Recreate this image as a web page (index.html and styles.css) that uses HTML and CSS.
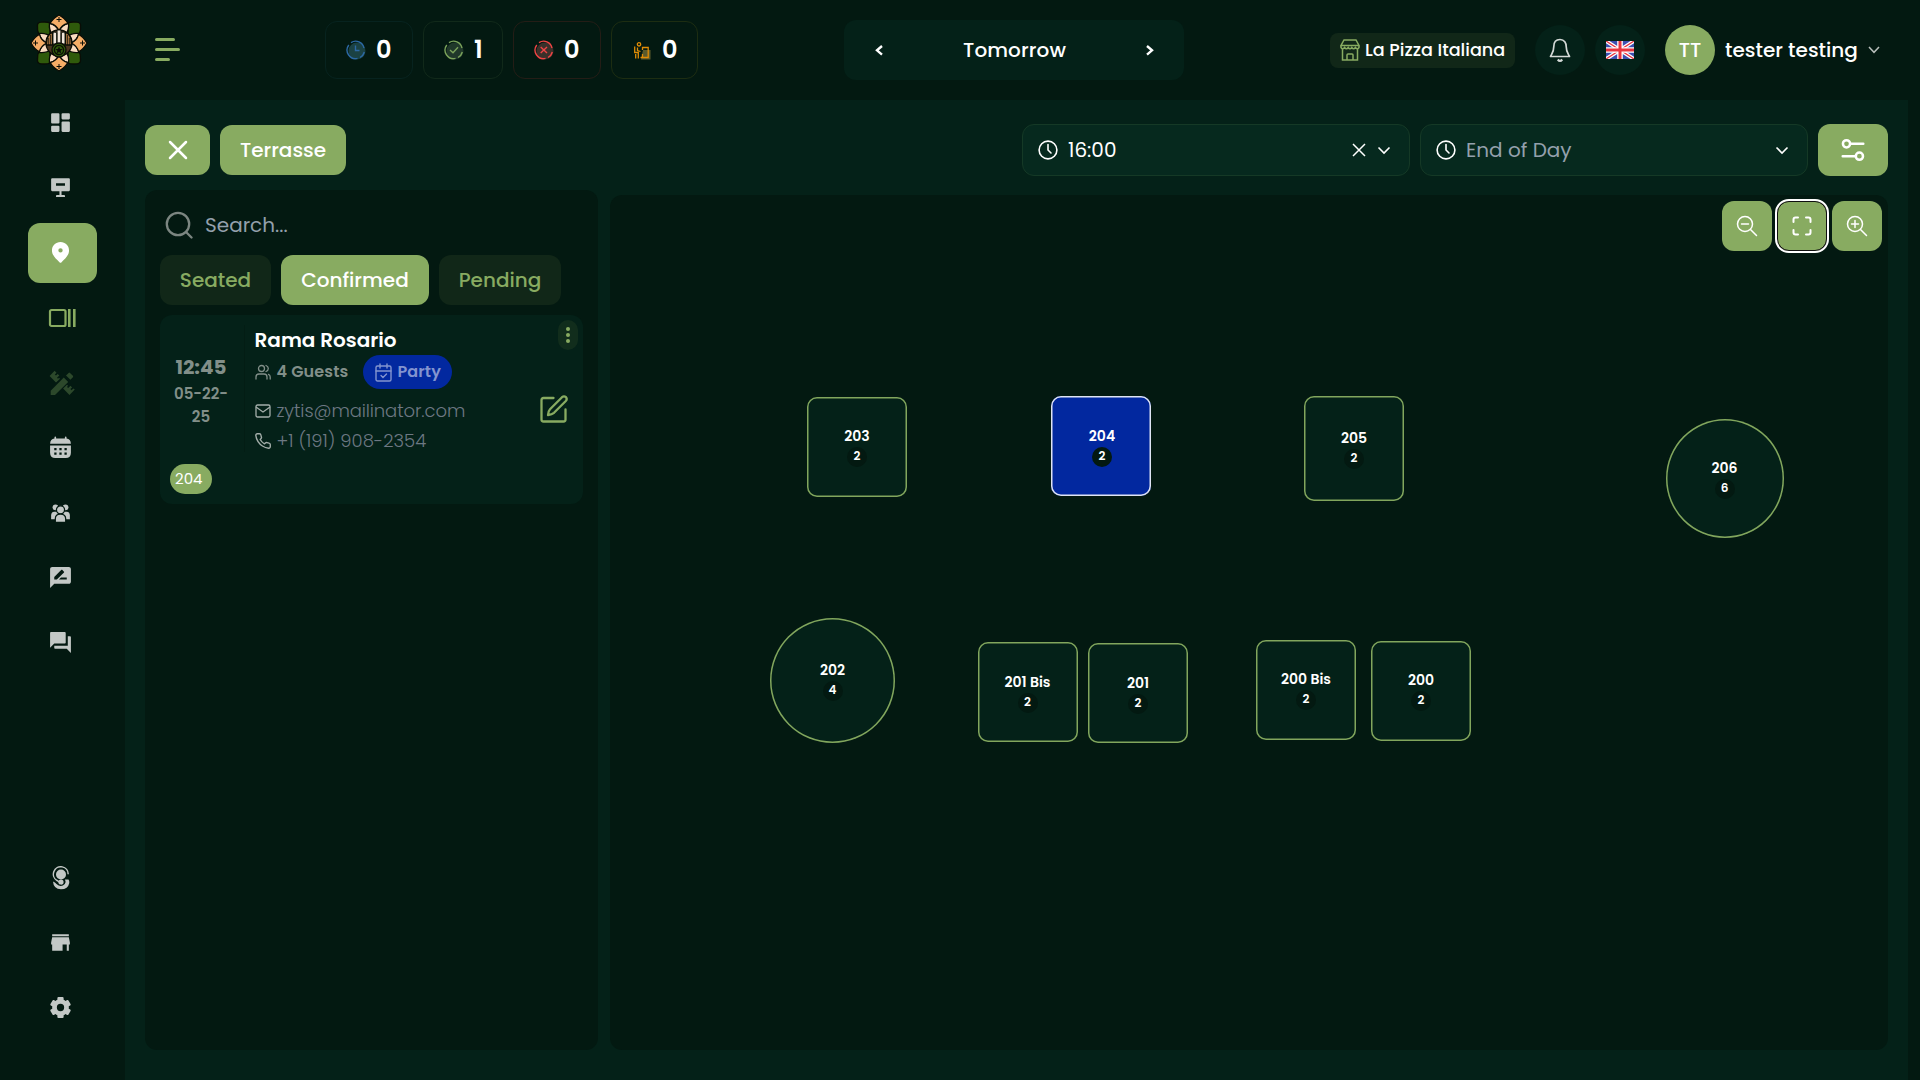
FILE: index.html
```html
<!DOCTYPE html>
<html lang="en">
<head>
<meta charset="utf-8">
<title>Floor plan</title>
<link rel="stylesheet" href="styles.css">
</head>
<body>
<div class="app">
  <aside class="sidebar">
    <div class="logo">
      <svg width="58" height="58" viewBox="-29 -29 58 58">
        <g stroke="#0a0d06" stroke-width="1.3" stroke-linejoin="round">
          <g fill="#2f5a0b">
            <path d="M-21.500-17.500Q-21.500-20.500-18-20.800Q-12-21.500-9-20V-8H-20Q-22-12-21.500-17.500Z"/>
            <path d="M21.500-17.500Q21.500-20.500 18-20.800Q12-21.500 9-20V-8H20Q22-12 21.500-17.500Z"/>
            <path d="M-21.500 17.500Q-21.500 20.500-18 20.800Q-12 21.500-9 20V8H-20Q-22 12-21.500 17.500Z"/>
            <path d="M21.500 17.500Q21.500 20.500 18 20.800Q12 21.500 9 20V8H20Q22 12 21.500 17.500Z"/>
          </g>
          <g id="petal">
            <path fill="#fbdcc0" d="M-9.500-20Q-3-18.500 0-12L-2-7H-6Q-10.500-13-9.500-20ZM9.500-20Q3-18.500 0-12L2-7H6Q10.500-13 9.500-20Z"/>
            <path fill="#f6ad66" d="M0-28Q-7-24-8.700-19.500Q-2.500-18 0-12Q2.500-18 8.700-19.500Q7-24 0-28Z"/>
            <path fill="none" stroke-width="1" d="M0-26V-21M-2.500-23.500H2.500"/>
          </g>
          <use href="#petal" transform="rotate(90)"/>
          <use href="#petal" transform="rotate(180)"/>
          <use href="#petal" transform="rotate(270)"/>
          <circle r="13" fill="#4a3520"/>
          <path fill="#b98048" d="M-12-4Q-10-10-6.500-10.500V2H-12.500ZM12-4Q10-10 6.500-10.500V2H12.500Z"/>
          <path fill="none" stroke-width=".8" d="M-10.300-5V2M-8.400-8V2M10.300-5V2M8.400-8V2"/>
          <path fill="#f0e5da" stroke-width=".9" d="M-6-10Q-4-12-2.300-10V1H-6ZM6-10Q4-12 2.300-10V1H6ZM-1.900-13H1.900V1H-1.900Z"/>
          <circle cy="7" r="7" fill="#2f5a0b"/>
          <circle cy="7" r="4.600" fill="#2f5a0b"/>
          <path fill="#0a0d06" stroke="none" d="M0 3.200L1 6 3.800 6.100 1.600 7.800 2.400 10.500 0 9-2.400 10.500-1.600 7.800-3.800 6.100-1 6Z"/>
        </g>
      </svg>
    </div>
    <nav class="nav">
      <a class="nav-item"><svg width="25" height="25" viewBox="0 0 24 24"><path d="M4 13h6a1 1 0 0 0 1-1V4a1 1 0 0 0-1-1H4a1 1 0 0 0-1 1v8a1 1 0 0 0 1 1zm0 8h6a1 1 0 0 0 1-1v-4a1 1 0 0 0-1-1H4a1 1 0 0 0-1 1v4a1 1 0 0 0 1 1zm10 0h6a1 1 0 0 0 1-1v-8a1 1 0 0 0-1-1h-6a1 1 0 0 0-1 1v8a1 1 0 0 0 1 1zM13 4v4a1 1 0 0 0 1 1h6a1 1 0 0 0 1-1V4a1 1 0 0 0-1-1h-6a1 1 0 0 0-1 1z"/></svg></a>
      <a class="nav-item"><svg width="25" height="25" viewBox="0 0 24 24"><path fill-rule="evenodd" d="M4 3h16a1 1 0 0 1 1 1v10.500a1 1 0 0 1-1 1h-7v3.700h2.500a.8.800 0 0 1 .8.800v1H7.700v-1a.8.800 0 0 1 .8-.8H11v-3.700H4a1 1 0 0 1-1-1V4a1 1 0 0 1 1-1zm3.700 4.800v2.400h8.600V7.800z"/></svg></a>
      <a class="nav-item active"><svg width="25" height="25" viewBox="0 0 24 24"><path fill-rule="evenodd" d="M12 2C7.300 2 3.800 5.600 3.800 10c0 5 4.200 8.200 7.200 11.300a1.300 1.300 0 0 0 2 0c3-3.100 7.200-6.300 7.200-11.300C20.200 5.600 16.700 2 12 2zm0 5.800a2.100 2.100 0 1 1 0 4.200 2.100 2.100 0 0 1 0-4.200z"/></svg></a>
      <a class="nav-item green wide"><svg width="28" height="20" viewBox="0 0 28 20"><rect x="2" y="2" width="15.500" height="16" rx="1.500" fill="none" stroke="currentColor" stroke-width="2.200"/><path d="M20 1h2.600v18H20zM25 1h2.600v18H25z"/></svg></a>
      <a class="nav-item faded wide"><svg width="26" height="26" viewBox="0 0 26 26"><path d="M1.700 20.800 14.800 7.600l4.400 4.300L6 25H1.700zM17 5.500l2.600-2.600q.7-.6 1.400 0l2.900 2.900q.6.700 0 1.400L21.400 9.800zM5.600.8 7.500 2.700 5.800 4.400 7 5.600l1.700-1.700 1.600 1.600-2.300 2.300L9 8.800l1-1 1 1-4 3.700L.6 6.100zM25.800 19.500l-5.300 5.400-6.400-6.300 3.900-3.900 1 1-1 1.200 1.200 1.200 2.300-2.300 1.600 1.600-1.700 1.600 1.200 1.200 1.700-1.700z"/></svg></a>
      <a class="nav-item"><svg width="25" height="25" viewBox="0 0 24 24"><path d="M7 1.500a.8.800 0 0 1 .8.800v1h8.400v-1a.8.800 0 0 1 1.600 0v1.100c2.600.3 4 1.900 4.200 5.100H2c.2-3.200 1.600-4.800 4.200-5.100V2.300a.8.800 0 0 1 .8-.8z"/><path fill-rule="evenodd" d="M2 10h20v7q0 5-5 5H7q-5 0-5-5zm4 2.500v2.200h2.200v-2.200zm4.900 0v2.200h2.200v-2.200zm4.900 0v2.200H18v-2.200zM6 16.700v2.200h2.200v-2.200zm4.900 0v2.200h2.200v-2.200zm4.900 0v2.200H18v-2.200z"/></svg></a>
      <a class="nav-item low"><svg width="25" height="25" viewBox="0 0 24 24"><circle cx="7.200" cy="6.100" r="2.800"/><circle cx="16.800" cy="6.100" r="2.800"/><path d="M6 10.400h12q3 .3 3 3.500v3.600H3v-3.600q0-3.200 3-3.500z"/><g class="cut"><circle cx="12" cy="8.500" r="3.900"/><path d="M7 20.600v-3.400q0-4.700 5-4.700t5 4.700v3.400z"/></g></svg></a>
      <a class="nav-item"><svg width="25" height="25" viewBox="0 0 24 24"><path d="M20 2H4c-1.100 0-1.990.9-1.990 2L2 22l4-4h14c1.100 0 2-.9 2-2V4c0-1.100-.9-2-2-2zM6 14v-2.470l6.880-6.880c.2-.2.510-.2.710 0l1.770 1.770c.2.200.2.510 0 .710L8.470 14H6zm12 0h-7.500l2-2H18v2z"/></svg></a>
      <a class="nav-item"><svg width="25" height="25" viewBox="0 0 24 24"><path d="M21 6h-2v9H6v2c0 .55.45 1 1 1h11l4 4V7c0-.55-.45-1-1-1zm-4 6V3c0-.55-.45-1-1-1H3c-.55 0-1 .45-1 1v14l4-4h10c.55 0 1-.45 1-1z"/></svg></a>
    </nav>
    <nav class="nav nav-bottom">
      <a class="nav-item low"><svg width="18" height="24" viewBox="0 0 18 24"><circle cx="9" cy="8.500" r="5"/><path d="M16.200 8.300A7.400 7.400 0 1 0 5 14.500L10 18" fill="none" stroke="currentColor" stroke-width="1.500"/><circle cx="9" cy="16" r="2.600"/><path d="M1 15.500q2 .5 3.500 2.500 4.500 4 8.300 0 1.500-2 .2-4.500h3.500q1 1 .8 3.500Q16 23.300 9 23.300 1.500 23 1 15.500z"/></svg></a>
      <a class="nav-item"><svg width="25" height="25" viewBox="0 0 24 24"><path d="M20 4H4v2h16V4zm1 10v-2l-1-5H4l-1 5v2h1v6h10v-6h4v6h2v-6h1z"/></svg></a>
      <a class="nav-item"><svg width="25" height="25" viewBox="0 0 24 24"><path d="m2.344 15.271 2 3.460a1 1 0 0 0 1.366.365l1.396-.806c.58.457 1.221.832 1.895 1.112V21a1 1 0 0 0 1 1h4a1 1 0 0 0 1-1v-1.598a8.094 8.094 0 0 0 1.895-1.112l1.396.806c.477.275 1.091.11 1.366-.365l2-3.460a1.004 1.004 0 0 0-.365-1.366l-1.372-.793a7.683 7.683 0 0 0-.002-2.224l1.372-.793c.476-.275.641-.89.365-1.366l-2-3.460a1 1 0 0 0-1.366-.365l-1.396.806A8.034 8.034 0 0 0 15 4.598V3a1 1 0 0 0-1-1h-4a1 1 0 0 0-1 1v1.598A8.094 8.094 0 0 0 7.105 5.710L5.710 4.904a.999.999 0 0 0-1.366.365l-2 3.460a1.004 1.004 0 0 0 .365 1.366l1.372.793a7.683 7.683 0 0 0 0 2.224l-1.372.793c-.476.275-.641.89-.365 1.366zM12 8.500a3.500 3.500 0 1 1 0 7 3.500 3.500 0 0 1 0-7z"/></svg></a>
    </nav>
  </aside>

  <div class="page">
    <header class="header">
      <button class="burger"><span class="bar bar-mid"></span><span class="bar"></span><span class="bar bar-short"></span></button>
      <div class="stats">
        <div class="stat stat-blue">
          <svg width="20" height="20" viewBox="0 0 20 20"><circle cx="11" cy="11" r="8.500" fill="#1b4244"/><g fill="none" stroke="#2c69a5" stroke-width="1.400"><path d="M5 2.600A8.500 8.500 0 0 1 18 8M18.300 12A8.500 8.500 0 0 1 14 17.500M11.500 18.400A8.500 8.500 0 0 1 2.800 5M9.500 5.500V10.500H13.500"/></g></svg>
          <span>0</span>
        </div>
        <div class="stat stat-green">
          <svg width="20" height="20" viewBox="0 0 20 20"><circle cx="11" cy="11" r="8.500" fill="#20382a"/><g fill="none" stroke="#7ba35b" stroke-width="1.400"><path d="M5 2.600A8.500 8.500 0 0 1 18 8M18.300 12A8.500 8.500 0 0 1 14 17.500M11.500 18.400A8.500 8.500 0 0 1 2.800 5M6 10L9 12.700 14 7.300"/></g></svg>
          <span>1</span>
        </div>
        <div class="stat stat-red">
          <svg width="20" height="20" viewBox="0 0 20 20"><circle cx="11" cy="11" r="8.500" fill="#3b302a"/><g fill="none" stroke="#ee4444" stroke-width="1.400"><path d="M5 2.600A8.500 8.500 0 0 1 18 8M18.300 12A8.500 8.500 0 0 1 14 17.500M11.500 18.400A8.500 8.500 0 0 1 2.800 5M6.700 7L13 13M13 7L6.700 13"/></g></svg>
          <span>0</span>
        </div>
        <div class="stat stat-amber">
          <svg width="20" height="20" viewBox="0 0 20 20"><path d="M11 10h7.500v9.500H9z" fill="#5a5a2c"/><g fill="none" stroke="#e08c06" stroke-width="1.300"><circle cx="7" cy="4.300" r="1.700"/><path d="M2.700 6.500V12.500H6.300V18.500M3.700 14V18.500M5.500 7.500V10.500L8.500 11.500M10.500 10V7.500H16.200V17.500H8.500M10.500 14V17"/></g></svg>
          <span>0</span>
        </div>
      </div>
      <div class="date">
        <svg width="9" height="11" viewBox="0 0 9 11"><path d="M7 1 2 5.300 7 9.600"/></svg>
        <span>Tomorrow</span>
        <svg width="9" height="11" viewBox="0 0 9 11"><path d="M2 1 7 5.300 2 9.600"/></svg>
      </div>
      <div class="account">
        <div class="venue">
          <svg width="20" height="22" viewBox="0 -1 20 22" fill="none" stroke="currentColor" stroke-width="1.500"><path d="M4 0H16L19 5.500H1zM1 5.500V7.500Q2.500 10 4.600 7.500 6.400 10 8.200 7.500 10 10 11.800 7.500 13.600 10 15.400 7.500 17.500 10 19 7.500V5.500M2.500 9V20H17.500V9M7 20V15Q7 14 8 14H12Q13 14 13 15V20"/></svg>
          <span>La Pizza Italiana</span>
        </div>
        <div class="round bell"><svg width="22" height="26" viewBox="0 0 22 26" fill="none" stroke="#d4d9d7" stroke-width="1.700" stroke-linejoin="round"><path d="M11 2.500C6.500 2.500 4.800 6 4.800 9.500 4.800 15 3 16.500 1.500 19.500H20.500C19 16.500 17.200 15 17.200 9.500 17.200 6 15.500 2.500 11 2.500Z"/><path d="M8.800 22.500Q11 25.500 13.200 22.500" stroke-width="2.200"/></svg></div>
        <div class="round flag"><svg width="28" height="18" viewBox="0 0 28 18"><path fill="#3d4fb0" d="M0 0H28V18H0z"/><path d="M0 0 28 18M28 0 0 18" stroke="#fff" stroke-width="3.800"/><path d="M0 0 28 18M28 0 0 18" stroke="#e8343f" stroke-width="1.300"/><path d="M14 0V18M0 9H28" stroke="#fff" stroke-width="5.600"/><path d="M14 0V18M0 9H28" stroke="#e8343f" stroke-width="3"/></svg></div>
        <div class="avatar">TT</div>
        <span class="user">tester testing</span>
        <svg class="user-chev" width="12" height="8" viewBox="0 0 12 8" fill="none" stroke="#b9bfbc" stroke-width="1.500"><path d="M1 1 6 6.300 11 1"/></svg>
      </div>
    </header>

    <main class="main">
      <div class="toolbar">
        <button class="btn btn-close"><svg width="20" height="20" viewBox="0 0 20 20" stroke="#fff" stroke-width="2.500" stroke-linecap="round"><path d="M2 2 18 18M18 2 2 18"/></svg></button>
        <button class="btn btn-zone">Terrasse</button>
        <div class="select select-first">
          <svg width="20" height="20" viewBox="0 0 20 20" fill="none" stroke="currentColor" stroke-width="1.600" stroke-linecap="round"><circle cx="10" cy="10" r="8.900"/><path d="M10 4.500V10L13 13"/></svg>
          <span class="value">16:00</span>
          <svg class="clear" width="14" height="14" viewBox="0 0 14 14" stroke="currentColor" stroke-width="1.500"><path d="M1 1 13 13M13 1 1 13"/></svg>
          <svg class="chev" width="14" height="9" viewBox="0 0 14 9" fill="none" stroke="currentColor" stroke-width="1.600"><path d="M1.500 1.500 7 7 12.500 1.500"/></svg>
        </div>
        <div class="select">
          <svg width="20" height="20" viewBox="0 0 20 20" fill="none" stroke="currentColor" stroke-width="1.600" stroke-linecap="round"><circle cx="10" cy="10" r="8.900"/><path d="M10 4.500V10L13 13"/></svg>
          <span class="value placeholder">End of Day</span>
          <svg class="chev" width="14" height="9" viewBox="0 0 14 9" fill="none" stroke="currentColor" stroke-width="1.600"><path d="M1.500 1.500 7 7 12.500 1.500"/></svg>
        </div>
        <button class="btn btn-filter"><svg width="24" height="24" viewBox="0 0 24 24" fill="none" stroke="#fff" stroke-width="2.500" stroke-linecap="round"><circle cx="5.500" cy="5.800" r="3.600"/><path d="M9.500 5.800H22.300M1.700 18.200H14"/><circle cx="18.400" cy="18.200" r="3.600"/></svg></button>
      </div>

      <div class="content">
        <section class="bookings">
          <div class="search">
            <svg width="28" height="28" viewBox="0 0 28 28" fill="none" stroke="#7c8681" stroke-width="2.300" stroke-linecap="round"><circle cx="13" cy="13" r="11.200"/><path d="M21 21 26.500 26.500"/></svg>
            <span>Search...</span>
          </div>
          <div class="tabs">
            <button class="tab tab-seated">Seated</button>
            <button class="tab tab-confirmed active">Confirmed</button>
            <button class="tab tab-pending">Pending</button>
          </div>
          <article class="card">
            <div class="card-body">
              <div class="when"><strong>12:45</strong><span>05-22-</span><span>25</span></div>
              <div class="info">
                <h3>Rama Rosario</h3>
                <div class="meta">
                  <svg width="16" height="16" viewBox="0 0 16 16" fill="none" stroke="currentColor" stroke-width="1.300" stroke-linecap="round"><circle cx="6.500" cy="4.500" r="3"/><path d="M1 15V13Q1 10 4 10H9Q12 10 12 13V15M11 1.500Q13.300 2.500 13.300 4.500T11 7.500M13.500 10.300Q15.200 11 15.200 13V15"/></svg>
                  <span class="guests">4 Guests</span>
                  <span class="tag"><svg width="17" height="19" viewBox="0 0 17 19" fill="none" stroke="currentColor" stroke-width="1.400" stroke-linecap="round"><rect x="1" y="3" width="15" height="15" rx="1.500"/><path d="M1 8H16M5 1V5M12 1V5M6 12.500 8 14.500 11.500 11"/></svg><span>Party</span></span>
                </div>
                <div class="contact mail"><svg width="16" height="14" viewBox="0 0 16 14" fill="none" stroke="currentColor" stroke-width="1.300"><rect x="1" y="1" width="14" height="12" rx="1.500"/><path d="M1 3 8 8 15 3"/></svg><span>zytis@mailinator.com</span></div>
                <div class="contact phone"><svg width="16" height="16" viewBox="1 1 22 22" fill="none" stroke="currentColor" stroke-width="1.900" stroke-linejoin="round"><path d="M22 16.920v3a2 2 0 0 1-2.180 2 19.790 19.790 0 0 1-8.630-3.070 19.500 19.500 0 0 1-6-6 19.790 19.790 0 0 1-3.070-8.670A2 2 0 0 1 4.110 2h3a2 2 0 0 1 2 1.720 12.840 12.840 0 0 0 .7 2.810 2 2 0 0 1-.45 2.110L8.090 9.910a16 16 0 0 0 6 6l1.270-1.270a2 2 0 0 1 2.110-.45 12.840 12.840 0 0 0 2.810.7A2 2 0 0 1 22 16.920z"/></svg><span>+1 (191) 908-2354</span></div>
              </div>
              <svg class="edit" width="28" height="28" viewBox="0 0 28 28" fill="none" stroke="#88ab61" stroke-width="2.300" stroke-linecap="round" stroke-linejoin="round"><path d="M13.500 3H3.500Q1.500 3 1.500 5V24.500Q1.500 26.500 3.500 26.500H23.500Q25.500 26.500 25.500 24.500V14.500"/><path d="M22 2.200Q24 .5 26 2.200 27.500 4.200 25.800 6L14 17.800Q12 19.500 8 20 8.300 16 10 14.200Z"/></svg>
              <div class="dots"><i></i><i></i><i></i></div>
            </div>
            <span class="table-tag">204</span>
          </article>
        </section>

        <section class="floor">
          <div class="zoom">
            <button class="btn"><svg width="22" height="22" viewBox="0 0 22 22" fill="none" stroke="#fff" stroke-width="1.500" stroke-linecap="round"><circle cx="9" cy="9" r="7.500"/><path d="M14.500 14.500 20.500 20.500M5.500 9H12.500"/></svg></button>
            <button class="btn focus"><svg width="20" height="20" viewBox="0 0 20 20" fill="none" stroke="#fff" stroke-width="2" stroke-linecap="round"><path d="M1.500 6V3.500Q1.500 1.500 3.500 1.500H6M14 1.500H16.500Q18.500 1.500 18.500 3.500V6M18.500 14V16.500Q18.500 18.500 16.500 18.500H14M6 18.500H3.500Q1.500 18.500 1.500 16.500V14"/></svg></button>
            <button class="btn"><svg width="22" height="22" viewBox="0 0 22 22" fill="none" stroke="#fff" stroke-width="1.500" stroke-linecap="round"><circle cx="9" cy="9" r="7.500"/><path d="M14.500 14.500 20.500 20.500M5.500 9H12.500M9 5.500V12.500"/></svg></button>
          </div>
          <div class="table t203"><b>203</b><span>2</span></div>
          <div class="table t204 taken"><b>204</b><span>2</span></div>
          <div class="table t205"><b>205</b><span>2</span></div>
          <div class="table t206 circle"><b>206</b><span>6</span></div>
          <div class="table t202 circle"><b>202</b><span>4</span></div>
          <div class="table t201b"><b>201 Bis</b><span>2</span></div>
          <div class="table t201"><b>201</b><span>2</span></div>
          <div class="table t200b"><b>200 Bis</b><span>2</span></div>
          <div class="table t200"><b>200</b><span>2</span></div>
        </section>
      </div>
    </main>
  </div>
</div>
</body>
</html>
```
FILE: styles.css
```css
* { box-sizing: border-box; }
:root {
  --dark: #031911;
  --panel: #042118;
  --green: #88ab61;
  --soft: #112718;
}
body {
  margin: 0;
  background: var(--dark);
  color: #fff;
  font-family: Poppins, Inter, "Open Sans", sans-serif;
  font-size: 20px;
}
button { border: 0; padding: 0; background: none; color: inherit; font: inherit; }
svg { display: block; flex: none; }
.app { display: flex; width: 1920px; height: 1080px; overflow: hidden; }

/* Sidebar */
.sidebar { width: 125px; display: flex; flex-direction: column; padding-bottom: 42px; }
.logo { height: 93px; padding: 14px 0 0 30px; }
.nav { display: flex; flex-direction: column; gap: 5px; }
.nav-bottom { margin-top: auto; }
.nav-item {
  width: 69px; height: 60px; margin-left: 28px; padding: 0 4px 2px 0;
  border-radius: 12px; display: flex; align-items: center; justify-content: center;
  color: #c3c8c6;
}
.nav-item path, .nav-item circle { fill: currentColor; }
.nav-item path[fill="none"] { fill: none; }
.nav-item .cut { stroke: var(--dark); stroke-width: 1.2px; }
.nav-item.active { background: var(--green); color: #fff; }
.nav-item.green { color: var(--green); }
.nav-item.faded { color: #2c482b; }
.nav-item.low { padding-bottom: 0; }
.nav-item.wide { padding: 0 1px 0 0; }

/* Header */
.page { flex: 1; display: flex; flex-direction: column; }
.header { height: 100px; display: flex; align-items: center; padding: 0 40px 0 30px; }
.burger { width: 26px; display: flex; flex-direction: column; gap: 7px; margin-bottom: 1px; }
.bar { height: 3px; width: 25px; border-radius: 2px; background: var(--green); }
.bar-mid { width: 20px; }
.bar-short { width: 15px; }
.stats { display: flex; gap: 10px; margin-left: 144px; }
.stat {
  width: 88px; height: 58px; padding-left: 20px; border: 1px solid; border-radius: 12px;
  display: flex; align-items: center; gap: 10px; font-size: 24px; font-weight: 600;
}
.stat span { margin-bottom: 1px; }
.stat-blue { border-color: #07231f; }
.stat-green { border-color: #11291a; width: 80px; }
.stat-red { border-color: #241d16; }
.stat-amber { border-color: #1d2d12; width: 87px; }
.date {
  width: 340px; height: 60px; margin-left: 146px; padding: 0 30px 0 31px; border-radius: 12px;
  background: var(--panel); display: flex; align-items: center; justify-content: space-between;
  font-weight: 500; letter-spacing: .1px;
}
.date svg { fill: none; stroke: #fff; stroke-width: 2.400; }
.account { display: flex; align-items: center; margin-left: 146px; }
.venue {
  width: 185px; height: 35px; padding-left: 10px; border-radius: 8px; background: var(--soft);
  color: var(--green); display: flex; align-items: center; gap: 5px;
}
.venue span { color: #fff; font-size: 17.6px; font-weight: 500; white-space: nowrap; margin-bottom: 1px; }
.round {
  width: 50px; height: 50px; border-radius: 50%; background: var(--panel);
  display: flex; align-items: center; justify-content: center;
}
.bell { margin: 0 10px 0 20px; padding-right: 1px; }
.avatar {
  width: 50px; height: 50px; margin: 0 10px 0 20px; border-radius: 50%; background: var(--green);
  display: flex; align-items: center; justify-content: center; font-weight: 500;
}
.user { width: 143px; font-weight: 500; white-space: nowrap; }

/* Main area */
.main {
  flex: 1; width: 1783px; padding: 24px 20px 30px; background: var(--panel);
  display: flex; flex-direction: column;
}
.toolbar { display: flex; align-items: center; height: 52px; gap: 10px; }
.btn {
  border-radius: 12px; background: var(--green); display: flex;
  align-items: center; justify-content: center; font-weight: 500;
}
.btn-close { width: 65px; height: 50px; }
.btn-zone { width: 126px; height: 50px; }
.btn-filter { width: 70px; height: 52px; }
.select {
  width: 388px; height: 52px; padding: 0 18px 0 15px; border: 1px solid #153926; border-radius: 12px;
  background: #06291e; display: flex; align-items: center; gap: 10px;
}
.select-first { margin-left: auto; }
.value { flex: 1; }
.clear { margin-right: 1px; }
.placeholder { color: #94a0ac; }
.content { flex: 1; display: flex; gap: 12px; padding-top: 14px; }
.bookings {
  width: 453px; padding: 15px; border-radius: 12px; background: var(--dark);
  display: flex; flex-direction: column;
}
.search { height: 40px; padding-left: 5px; display: flex; align-items: center; gap: 12px; color: #94a0ac; }
.tabs { display: flex; gap: 10px; margin: 10px 0; }
.tab { height: 50px; border-radius: 12px; background: var(--soft); color: var(--green); font-weight: 500; }
.tab-seated { width: 111px; }
.tab-confirmed { width: 148px; }
.tab-pending { width: 122px; }
.tab.active { background: var(--green); color: #fff; }

/* Booking card */
.card { height: 189px; padding: 10px; border-radius: 12px; background: var(--panel); }
.card-body { height: 127px; display: flex; position: relative; }
.when {
  width: 75px; padding: 3px 12px 0 0; border-right: 1px solid #031d14; color: #828f89;
  display: flex; flex-direction: column; align-items: center; justify-content: center;
  font-size: 15px; font-weight: 600; line-height: 23px;
}
.when strong { font-size: 20px; font-weight: 700; line-height: 30px; }
.info { padding-left: 9.5px; }
h3 { margin: 0; font-size: 20px; font-weight: 600; line-height: 30px; white-space: nowrap; }
.meta { height: 34px; display: flex; align-items: center; color: #828f89; font-size: 16px; font-weight: 600; }
.guests { width: 86px; margin: 0 0 1px 6px; white-space: nowrap; letter-spacing: .15px; }
.tag {
  width: 89px; height: 34px; padding-left: 12px; border-radius: 17px; background: #02289f; color: #8394cf;
  display: flex; align-items: center; gap: 6px;
}
.tag span { margin-bottom: 1px; letter-spacing: .1px; }
.contact { height: 30px; display: flex; align-items: center; gap: 6px; color: #a4aeaa; font-size: 18px; font-weight: 300; }
.contact span { color: #6d7883; white-space: nowrap; margin-bottom: 2px; }
.mail { margin-top: 7px; letter-spacing: -.1px; }
.edit { position: absolute; right: 5.5px; top: 70px; }
.dots {
  position: absolute; right: -5px; top: -5px; width: 20px; height: 30px; border-radius: 10px;
  background: #112d1c; display: flex; flex-direction: column; gap: 2px; align-items: center; justify-content: center;
}
.dots i { width: 4px; height: 4px; border-radius: 50%; background: var(--green); }
.table-tag {
  width: 42px; height: 30px; margin-top: 12px; padding: 0 0 1px 5px; border-radius: 15px;
  background: var(--green); display: flex; align-items: center; font-size: 15px;
}

/* Floor plan */
.floor { position: relative; flex: 1; margin-top: 5px; border-radius: 12px; background: var(--dark); }
.zoom { display: flex; justify-content: flex-end; gap: 5px; padding: 6px 6px 0 0; }
.zoom .btn { width: 50px; height: 50px; }
.zoom .focus { border: 1px solid #101010; outline: 2px solid #fff; box-shadow: 0 0 0 1px #101010; }
.table {
  position: absolute; width: 100px; height: 100px; box-shadow: inset 0 0 0 1.5px #82a65d; border-radius: 10px;
  background: var(--panel); display: flex; flex-direction: column; align-items: center; justify-content: center;
}
.table b { font-size: 14px; font-weight: 600; line-height: 21px; }
.table span {
  width: 20px; height: 20px; border-radius: 50%; background: var(--dark);
  font-size: 12px; font-weight: 600; line-height: 18px; text-align: center;
}
.circle { border-radius: 50%; }
.taken { background: #02289f; box-shadow: inset 0 0 0 1.5px #dfe3f3; padding: 1px 0 0 2px; }
.t203 { left: 197px; top: 201.5px; }
.t204 { left: 441px; top: 201px; }
.t205 { left: 694px; top: 201px; height: 105px; }
.t206 { left: 1055.5px; top: 224px; width: 118px; height: 118.5px; padding-top: 1px; }
.t202 { left: 160px; top: 423px; width: 125px; height: 125px; }
.t201b { left: 367.5px; top: 447px; }
.t201 { left: 478px; top: 448px; }
.t200b { left: 646px; top: 445px; padding-bottom: 1px; }
.t200 { left: 761px; top: 445.5px; }
```
